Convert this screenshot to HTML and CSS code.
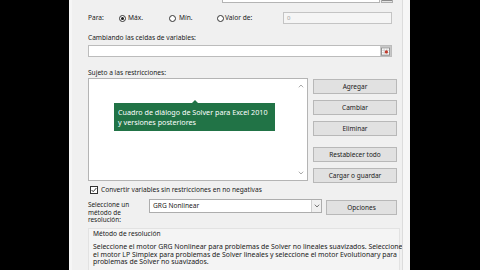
FILE: index.html
```html
<!DOCTYPE html>
<html>
<head>
<meta charset="utf-8">
<link rel="stylesheet" href="styles.css">
</head>
<body>
<div class="screen">
  <div class="dialog">
    <div class="panel">
      <div class="row top-row">
        <span class="lbl obj">Establecer objetivo:</span>
        <div class="input obj-input"></div>
        <div class="range-btn"><svg width="10" height="9" viewBox="0 0 10 9"><rect x="0.5" y="0.5" width="9" height="8" fill="#fff" stroke="#8a8a8a"/><path d="M1 3.2H9M1 5.8H9M3.5 1V8M6.5 1V8" stroke="#bdbdbd" stroke-width="0.7"/><circle cx="6" cy="5" r="1.8" fill="#c0392b"/></svg></div>
      </div>
      <div class="row para-row">
        <span class="lbl para">Para:</span>
        <span class="radio checked"></span><span class="lbl rtext r1">Máx.</span>
        <span class="radio"></span><span class="lbl rtext r2">Mín.</span>
        <span class="radio"></span><span class="lbl rtext r3">Valor de:</span>
        <div class="input val-input">0</div>
      </div>
      <div class="lbl section s1">Cambiando las celdas de variables:</div>
      <div class="row input-row">
        <div class="input wide">
          <span class="range-mini"><svg width="10" height="9" viewBox="0 0 10 9"><rect x="0.5" y="0.5" width="9" height="8" fill="#fff" stroke="#8a8a8a"/><path d="M1 3.2H9M1 5.8H9M3.5 1V8M6.5 1V8" stroke="#bdbdbd" stroke-width="0.7"/><circle cx="6" cy="5" r="1.8" fill="#c0392b"/></svg></span>
        </div>
      </div>
      <div class="lbl section s2">Sujeto a las restricciones:</div>
      <div class="row list-row">
        <div class="listbox">
          <svg class="arrow up" width="6" height="4" viewBox="0 0 6 4"><path d="M0.8 3.3L3 1L5.2 3.3" fill="none" stroke="#a0a0a0" stroke-width="0.9"/></svg>
          <svg class="arrow down" width="6" height="4" viewBox="0 0 6 4"><path d="M0.8 0.7L3 3L5.2 0.7" fill="none" stroke="#a0a0a0" stroke-width="0.9"/></svg>
          <div class="tooltip">
            <span class="tip-arrow"></span>
            Cuadro de diálogo de Solver para Excel 2010<br>y versiones posteriores
          </div>
        </div>
        <div class="btn-col">
          <div class="btn">Agregar</div>
          <div class="btn">Cambiar</div>
          <div class="btn">Eliminar</div>
          <div class="btn sep">Restablecer todo</div>
          <div class="btn">Cargar o guardar</div>
        </div>
      </div>
      <div class="row check-row">
        <span class="checkbox"><svg width="8" height="8" viewBox="0 0 8 8"><path d="M1.6 4L3.2 5.7L6.4 2" fill="none" stroke="#222" stroke-width="0.9"/></svg></span>
        <span class="lbl">Convertir variables sin restricciones en no negativas</span>
      </div>
      <div class="row select-row">
        <div class="lbl sel-label">Seleccione un<br>método de<br>resolución:</div>
        <div class="select">
          <span class="sel-text">GRG Nonlinear</span>
          <span class="sel-btn"><svg width="6" height="4" viewBox="0 0 6 4"><path d="M0.8 0.7L3 3L5.2 0.7" fill="none" stroke="#666" stroke-width="0.9"/></svg></span>
        </div>
        <div class="btn opciones">Opciones</div>
      </div>
      <div class="group">
        <div class="lbl legend">Método de resolución</div>
        <div class="lbl desc">Seleccione el motor GRG Nonlinear para problemas de Solver no lineales suavizados. Seleccione<br>el motor LP Simplex para problemas de Solver lineales y seleccione el motor Evolutionary para<br>problemas de Solver no suavizados.</div>
      </div>
    </div>
  </div>
</div>
</body>
</html>
```

FILE: styles.css
```css
* { box-sizing: border-box; }
html, body { margin: 0; padding: 0; }
body { background: #000; width: 480px; height: 270px; overflow: hidden; }
.screen { display: flex; width: 480px; height: 270px; }
.dialog {
  margin-left: 69px;
  width: 341px;
  height: 270px;
  background: #f6f6f6;
  padding: 0 7px 0 3px;
  font-family: "Noto Sans", "Open Sans", sans-serif;
  font-size: 6.6px;
  color: #202020;
}
.panel {
  height: 270px;
  background: #f0f0f0;
  border-right: 1px solid #dcdcdc;
  padding-left: 16px;
  overflow: hidden;
}
.lbl { line-height: 8px; white-space: nowrap; }
.row { display: flex; align-items: center; }
.input { background: #fff; border: 1px solid #b4b4b4; }
.top-row { margin-top: -10px; height: 13px; }
.obj { width: 134px; margin-top: -1px; }
.obj-input { width: 158px; height: 13px; }
.range-btn { width: 12px; height: 12px; margin-left: 1px; display: flex; align-items: center; justify-content: center; background: #e4e4e4; border: 1px solid #adadad; }
.para-row { margin-top: 9px; height: 12px; }
.para { width: 31px; }
.radio { width: 7px; height: 7px; border: 1px solid #333; border-radius: 50%; background: #fff; position: relative; flex: none; margin-top: 1px; }
.radio.checked::after { content: ""; position: absolute; left: 1px; top: 1px; width: 3px; height: 3px; border-radius: 50%; background: #1a1a1a; }
.r1 { width: 41px; margin-left: 2px; }
.r2 { width: 38px; margin-left: 3px; }
.r3 { width: 58px; margin-left: 1px; }
.val-input { width: 109px; height: 12px; background: #f5f5f5; border-color: #c4c4c4; color: #a0a0a0; font-size: 6px; line-height: 10px; padding-left: 3px; }
.section { height: 8px; }
.s1 { margin-top: 10px; }
.input-row { margin-top: 3px; }
.wide { width: 304px; height: 12px; display: flex; justify-content: flex-end; align-items: center; border-color: #bcbcbc; }
.range-mini { display: flex; width: 11px; height: 10px; align-items: center; justify-content: center; background: #e8e8e8; border: 1px solid #c8c8c8; }
.s2 { margin-top: 12px; }
.list-row { margin-top: 1px; align-items: flex-start; height: 105px; }
.listbox { width: 220px; height: 103px; background: #fff; border: 1px solid #b4b4b4; position: relative; }
.arrow { position: absolute; right: 3px; }
.arrow.up { top: 5px; }
.arrow.down { bottom: 5px; }
.tooltip {
  position: absolute; left: 25px; top: 24px; width: 161px; height: 28px;
  background: #217346; color: #fff; font-size: 7.2px; line-height: 10px;
  padding: 4px 0 0 4px; white-space: nowrap;
}
.tip-arrow { position: absolute; left: 78px; top: -3px; width: 0; height: 0; border-left: 3px solid transparent; border-right: 3px solid transparent; border-bottom: 3px solid #217346; }
.btn-col { display: flex; flex-direction: column; gap: 6px; margin-left: 5px; margin-top: 1px; }
.btn { width: 84px; height: 15px; background: #e1e1e1; border: 1px solid #b8b8b8; display: flex; align-items: center; justify-content: center; line-height: 8px; white-space: nowrap; font-size: 6.5px; }
.btn.sep { margin-top: 5px; }
.check-row { margin-top: 3px; height: 8px; }
.checkbox { width: 8px; height: 8px; border: 1px solid #333; background: #fff; margin-left: 2px; margin-right: 3px; display: flex; flex: none; }
.checkbox svg { margin: -1px; }
.select-row { margin-top: 5px; align-items: flex-start; height: 24px; }
.sel-label { width: 61px; margin-top: 2px; line-height: 7.6px; font-size: 6.4px; }
.select { width: 173px; height: 14px; background: #fff; border: 1px solid #adadad; display: flex; align-items: center; justify-content: space-between; }
.sel-text { padding-left: 3px; line-height: 8px; }
.sel-btn { width: 10px; height: 12px; background: #f0f0f0; border-left: 1px solid #cfcfcf; display: flex; align-items: center; justify-content: center; }
.opciones { width: 71px; margin-left: 4px; margin-top: 1px; }
.group { margin-top: 5px; width: 312px; height: 50px; background: #f4f4f4; border: 1px solid #e2e2e2; padding: 1px 0 0 4px; }
.legend { line-height: 7px; }
.desc { font-size: 6.9px; line-height: 7.5px; margin-top: 6px; }
```
